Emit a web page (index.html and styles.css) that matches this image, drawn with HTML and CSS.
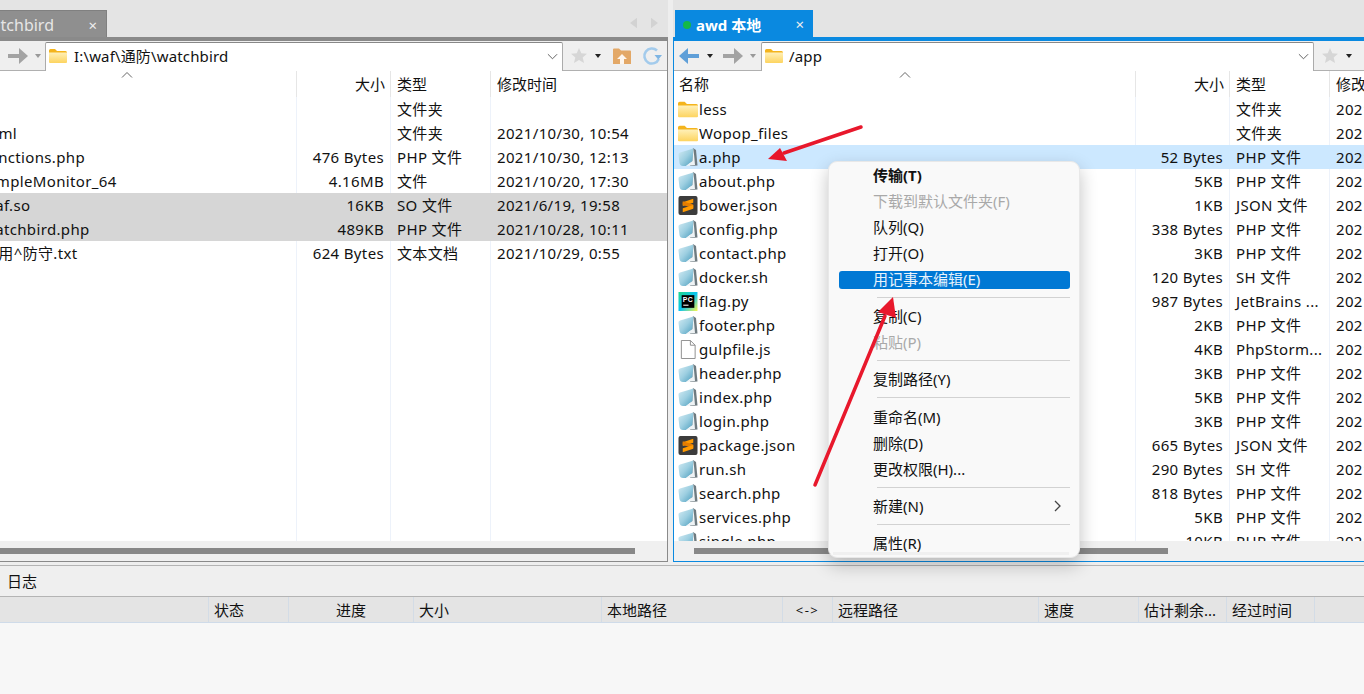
FILE: index.html
```html
<!DOCTYPE html>
<html lang="zh">
<head>
<meta charset="utf-8">
<title>awd 本地</title>
<link rel="stylesheet" href="styles.css">
</head>
<body>
<svg class="sprite" aria-hidden="true">
  <defs>
    <linearGradient id="gFolder" x1="0" y1="0" x2="0" y2="1"><stop offset="0" stop-color="#fff0b8"/><stop offset="1" stop-color="#fdd45f"/></linearGradient>
    <linearGradient id="gPhp" x1="0" y1="0" x2="1" y2="1"><stop offset="0" stop-color="#d4ebf3"/><stop offset=".5" stop-color="#9dcfe1"/><stop offset="1" stop-color="#4a9cbd"/></linearGradient>
    <linearGradient id="gPc" x1="0" y1="0" x2="1" y2="1"><stop offset="0" stop-color="#21d789"/><stop offset=".5" stop-color="#07c3f2"/><stop offset="1" stop-color="#fcf84a"/></linearGradient>
    <symbol id="i-folder" viewBox="0 0 18 16"><path d="M0 2.500Q0 1 1.500 1H6l2 2h8.500Q18 3 18 4.500V6H0z" fill="#f4b41c"/><path d="M0 4.500h18V14q0 1-1 1H1q-1 0-1-1z" fill="url(#gFolder)"/></symbol>
    <symbol id="i-php" viewBox="0 0 20 19"><path d="M15 0 18 2 19.500 17.500 12 18z" fill="#6f7b80"/><path d="M.5 7Q0 5 2 4.500L15.500.5 14.500 13 8 18H5Q2 18 1.500 15z" fill="url(#gPhp)"/><path d="M15.500.5 14.500 13 8 18 17 17z" fill="#eef3f5"/></symbol>
    <symbol id="i-sublime" viewBox="0 0 20 20"><rect width="20" height="20" rx="2" fill="#3c3c3c"/><path d="M15.500 3v4L4.500 10.500v-4z" fill="#ff9a00"/><path d="M4.500 9.500 15.500 13V9L4.500 5.500z" fill="#e57d00"/><path d="M15.500 9.500v4l-11 3.500v-4z" fill="#ff9a00"/></symbol>
    <symbol id="i-pycharm" viewBox="0 0 18 18"><rect width="18" height="18" fill="url(#gPc)"/><rect x="3" y="3" width="12" height="12" fill="#000"/><text x="4" y="9.500" class="pc-text">PC</text><rect x="4.500" y="12" width="5" height="1" fill="#fff"/></symbol>
    <symbol id="i-file" viewBox="0 0 16 20"><path d="M1 .5h9.500l5 5V19.500H1z" fill="#fff" stroke="#8c8c8c"/><path d="M10.500 .5v5h5" fill="none" stroke="#8c8c8c"/></symbol>
    <symbol id="i-arrow" viewBox="0 0 20 16"><path d="M0 6h11V0l9 8-9 8v-6H0z"/></symbol>
    <symbol id="i-star" viewBox="0 0 16 15"><path d="M8 0l2.300 5.200 5.700.5-4.300 3.700 1.300 5.600L8 12l-5 3 1.300-5.600L0 5.700l5.700-.5z"/></symbol>
  </defs>
</svg>

<div class="app">
  <div class="panes">
    <section class="pane pane-local">
      <div class="tabbar">
        <div class="tab tab-idle"><span class="tab-label">watchbird</span><span class="tab-close">×</span></div>
        <div class="tab-nav">
          <svg class="nav-tri" viewBox="0 0 8 12"><path d="M8 0v12L0 6z"/></svg>
          <svg class="nav-tri" viewBox="0 0 8 12"><path d="M0 0v12l8-6z"/></svg>
        </div>
      </div>
      <div class="pane-body">
        <div class="toolbar">
          <svg class="tool-arrow flip tool-blue"><use href="#i-arrow"/></svg><i class="caret"></i>
          <svg class="tool-arrow tool-gray"><use href="#i-arrow"/></svg><i class="caret caret-off"></i>
          <div class="address">
            <svg class="ico-folder"><use href="#i-folder"/></svg><span class="path">I:\waf\通防\watchbird</span>
            <svg class="chev" viewBox="0 0 12 7"><path d="M1 1l5 5 5-5"/></svg>
          </div>
          <svg class="star"><use href="#i-star"/></svg><i class="caret caret-star"></i>
          <svg class="upfolder" viewBox="0 0 18 16"><path d="M0 1.500Q0 .5 1 .5h5l2 2h9q1 0 1 1V16H0z" fill="#e3a867"/><path d="M9 6l5 5h-3v5H7v-5H4z" fill="#fdf6ee"/></svg>
          <svg class="refresh" viewBox="0 0 20 20"><path d="M15 4.500A7.500 7.500 0 1 0 16.800 13" fill="none" stroke="#a3cbec" stroke-width="2.600"/><path d="M12.500 9h7.500l-3.700 4.500z" fill="#7fb5e3"/></svg>
        </div>
        <div class="thead">
          <span class="c-name"><svg class="sort" viewBox="0 0 12 6"><path d="M1 5.500l5-5 5 5"/></svg>名称</span><span class="c-size">大小</span><span class="c-type">类型</span><span class="c-date">修改时间</span>
        </div>
        <div class="list">
          <div class="row"><span class="c-name"><svg class="ico"><use href="#i-folder"/></svg>..</span><span class="c-size"></span><span class="c-type">文件夹</span><span class="c-date"></span></div>
          <div class="row"><span class="c-name"><svg class="ico"><use href="#i-folder"/></svg>html</span><span class="c-size"></span><span class="c-type">文件夹</span><span class="c-date">2021/10/30, 10:54</span></div>
          <div class="row"><span class="c-name"><svg class="ico"><use href="#i-php"/></svg>functions.php</span><span class="c-size">476 Bytes</span><span class="c-type">PHP 文件</span><span class="c-date">2021/10/30, 12:13</span></div>
          <div class="row"><span class="c-name"><svg class="ico"><use href="#i-file"/></svg>SimpleMonitor_64</span><span class="c-size">4.16MB</span><span class="c-type">文件</span><span class="c-date">2021/10/20, 17:30</span></div>
          <div class="row row-grey"><span class="c-name"><svg class="ico"><use href="#i-file"/></svg>waf.so</span><span class="c-size">16KB</span><span class="c-type">SO 文件</span><span class="c-date">2021/6/19, 19:58</span></div>
          <div class="row row-grey"><span class="c-name"><svg class="ico"><use href="#i-php"/></svg>watchbird.php</span><span class="c-size">489KB</span><span class="c-type">PHP 文件</span><span class="c-date">2021/10/28, 10:11</span></div>
          <div class="row"><span class="c-name"><svg class="ico"><use href="#i-file"/></svg>使用^防守.txt</span><span class="c-size">624 Bytes</span><span class="c-type">文本文档</span><span class="c-date">2021/10/29, 0:55</span></div>
        </div>
        <div class="hscroll"><div class="thumb thumb-local"></div></div>
      </div>
    </section>

    <section class="pane pane-remote">
      <div class="tabbar">
        <div class="tab tab-active"><i class="dot"></i><span class="tab-label">awd 本地</span><span class="tab-close">×</span></div>
      </div>
      <div class="pane-body">
        <div class="toolbar">
          <svg class="tool-arrow flip tool-blue"><use href="#i-arrow"/></svg><i class="caret"></i>
          <svg class="tool-arrow tool-gray"><use href="#i-arrow"/></svg><i class="caret caret-off"></i>
          <div class="address">
            <svg class="ico-folder"><use href="#i-folder"/></svg><span class="path">/app</span>
            <svg class="chev" viewBox="0 0 12 7"><path d="M1 1l5 5 5-5"/></svg>
          </div>
          <svg class="star"><use href="#i-star"/></svg><i class="caret caret-star"></i>
        </div>
        <div class="thead">
          <span class="c-name"><svg class="sort" viewBox="0 0 12 6"><path d="M1 5.500l5-5 5 5"/></svg>名称</span><span class="c-size">大小</span><span class="c-type">类型</span><span class="c-date">修改时间</span>
        </div>
        <div class="list">
          <div class="row"><span class="c-name"><svg class="ico"><use href="#i-folder"/></svg>less</span><span class="c-size"></span><span class="c-type">文件夹</span><span class="c-date">2021/10/30</span></div>
          <div class="row"><span class="c-name"><svg class="ico"><use href="#i-folder"/></svg>Wopop_files</span><span class="c-size"></span><span class="c-type">文件夹</span><span class="c-date">2021/10/30</span></div>
          <div class="row row-sel"><span class="c-name"><svg class="ico"><use href="#i-php"/></svg>a.php</span><span class="c-size">52 Bytes</span><span class="c-type">PHP 文件</span><span class="c-date">2021/10/30</span></div>
          <div class="row"><span class="c-name"><svg class="ico"><use href="#i-php"/></svg>about.php</span><span class="c-size">5KB</span><span class="c-type">PHP 文件</span><span class="c-date">2021/10/30</span></div>
          <div class="row"><span class="c-name"><svg class="ico"><use href="#i-sublime"/></svg>bower.json</span><span class="c-size">1KB</span><span class="c-type">JSON 文件</span><span class="c-date">2021/10/30</span></div>
          <div class="row"><span class="c-name"><svg class="ico"><use href="#i-php"/></svg>config.php</span><span class="c-size">338 Bytes</span><span class="c-type">PHP 文件</span><span class="c-date">2021/10/30</span></div>
          <div class="row"><span class="c-name"><svg class="ico"><use href="#i-php"/></svg>contact.php</span><span class="c-size">3KB</span><span class="c-type">PHP 文件</span><span class="c-date">2021/10/30</span></div>
          <div class="row"><span class="c-name"><svg class="ico"><use href="#i-php"/></svg>docker.sh</span><span class="c-size">120 Bytes</span><span class="c-type">SH 文件</span><span class="c-date">2021/10/30</span></div>
          <div class="row"><span class="c-name"><svg class="ico"><use href="#i-pycharm"/></svg>flag.py</span><span class="c-size">987 Bytes</span><span class="c-type">JetBrains ...</span><span class="c-date">2021/10/30</span></div>
          <div class="row"><span class="c-name"><svg class="ico"><use href="#i-php"/></svg>footer.php</span><span class="c-size">2KB</span><span class="c-type">PHP 文件</span><span class="c-date">2021/10/30</span></div>
          <div class="row"><span class="c-name"><svg class="ico"><use href="#i-file"/></svg>gulpfile.js</span><span class="c-size">4KB</span><span class="c-type">PhpStorm...</span><span class="c-date">2021/10/30</span></div>
          <div class="row"><span class="c-name"><svg class="ico"><use href="#i-php"/></svg>header.php</span><span class="c-size">3KB</span><span class="c-type">PHP 文件</span><span class="c-date">2021/10/30</span></div>
          <div class="row"><span class="c-name"><svg class="ico"><use href="#i-php"/></svg>index.php</span><span class="c-size">5KB</span><span class="c-type">PHP 文件</span><span class="c-date">2021/10/30</span></div>
          <div class="row"><span class="c-name"><svg class="ico"><use href="#i-php"/></svg>login.php</span><span class="c-size">3KB</span><span class="c-type">PHP 文件</span><span class="c-date">2021/10/30</span></div>
          <div class="row"><span class="c-name"><svg class="ico"><use href="#i-sublime"/></svg>package.json</span><span class="c-size">665 Bytes</span><span class="c-type">JSON 文件</span><span class="c-date">2021/10/30</span></div>
          <div class="row"><span class="c-name"><svg class="ico"><use href="#i-php"/></svg>run.sh</span><span class="c-size">290 Bytes</span><span class="c-type">SH 文件</span><span class="c-date">2021/10/30</span></div>
          <div class="row"><span class="c-name"><svg class="ico"><use href="#i-php"/></svg>search.php</span><span class="c-size">818 Bytes</span><span class="c-type">PHP 文件</span><span class="c-date">2021/10/30</span></div>
          <div class="row"><span class="c-name"><svg class="ico"><use href="#i-php"/></svg>services.php</span><span class="c-size">5KB</span><span class="c-type">PHP 文件</span><span class="c-date">2021/10/30</span></div>
          <div class="row"><span class="c-name"><svg class="ico"><use href="#i-php"/></svg>single.php</span><span class="c-size">10KB</span><span class="c-type">PHP 文件</span><span class="c-date">2021/10/30</span></div>
        </div>
        <div class="hscroll"><div class="thumb thumb-remote"></div></div>
      </div>
    </section>
  </div>

  <div class="logbar">日志</div>
  <div class="queue-head">
    <span></span><span>状态</span><span class="center">进度</span><span>大小</span><span>本地路径</span><span class="center dir">&lt;-&gt;</span><span>远程路径</span><span>速度</span><span>估计剩余...</span><span>经过时间</span><span></span>
  </div>
  <div class="queue-body"></div>
</div>

<div class="menu">
  <div class="mi mi-bold">传输(T)</div>
  <div class="mi mi-off">下载到默认文件夹(F)</div>
  <div class="mi">队列(Q)</div>
  <div class="mi">打开(O)</div>
  <div class="mi mi-sel"><span>用记事本编辑(E)</span></div>
  <div class="sep"></div>
  <div class="mi">复制(C)</div>
  <div class="mi mi-off">粘贴(P)</div>
  <div class="sep"></div>
  <div class="mi">复制路径(Y)</div>
  <div class="sep"></div>
  <div class="mi">重命名(M)</div>
  <div class="mi">删除(D)</div>
  <div class="mi">更改权限(H)...</div>
  <div class="sep"></div>
  <div class="mi mi-sub">新建(N)<svg class="sub-chev" viewBox="0 0 7 12"><path d="M1 1l5 5-5 5"/></svg></div>
  <div class="sep"></div>
  <div class="mi">属性(R)</div>
  <div class="menu-strip"></div>
</div>

<svg class="annot" viewBox="0 0 1364 694">
  <path class="annot-line" d="M861 127 784 153"/>
  <path class="annot-head" d="M768 159 780 148 787 161z"/>
  <path class="annot-line" d="M815 485 885 316"/>
  <path class="annot-head" d="M893 297 896 318 878 312z"/>
</svg>
</body>
</html>
```

FILE: styles.css
```css
* { box-sizing: border-box; }
html, body { margin: 0; height: 100%; }
body {
  position: relative;
  overflow: hidden;
  width: 1364px;
  height: 694px;
  background: #f7f7f7;
  color: #111;
  font: 15px/24px "Noto Sans", "Noto Sans CJK SC", sans-serif;
}
.sprite { position: absolute; width: 0; height: 0; }
.pc-text { font: bold 6.5px "Liberation Sans", sans-serif; fill: #fff; }

/* The window is cropped on the left, so the app starts off-screen. */
.app { width: 1406px; margin-left: -42px; height: 694px; display: flex; flex-direction: column; }
.panes { display: grid; grid-template-columns: 710px 1fr; column-gap: 5px; height: 566px; background: #eee; border-bottom: 1px solid #b4b4b4; flex: none; }
.pane { min-width: 0; overflow: hidden; }

.tabbar { height: 37px; background: #e4e4e4; display: flex; align-items: flex-end; padding-left: 2px; }
.tab { height: 27px; display: flex; align-items: center; color: #fff; position: relative; flex: none; padding-top: 2px; }
.tab-idle { width: 147px; background: #8f8f8f; border: 1px solid #808080; border-bottom: 0; padding-left: 18px; color: #e6e6e6; font-size: 16px; }
.tab-active { width: 138px; margin-bottom: -1px; height: 28px; background: #0a89e0; padding-left: 8px; font-weight: 700; }
.dot { width: 8px; height: 8px; border-radius: 50%; background: #14b84a; margin-right: 5px; }
.tab-close { position: absolute; right: 9px; top: 2px; font-weight: 400; font-size: 15px; color: #eee; }
.tab-nav { margin-left: auto; display: flex; gap: 14px; padding: 0 10px 8px 0; }
.nav-tri { width: 7px; height: 12px; fill: #d2d2d2; }

.pane-body { height: 525px; display: flex; flex-direction: column; background: #fff; }
.pane-local .pane-body { border-top: 4px solid #8a8a8a; border-right: 1px solid #8a8a8a; border-bottom: 1px solid #8a8a8a; }
.pane-remote .pane-body { border-top: 4px solid #0a89e0; border-left: 1px solid #0a89e0; border-bottom: 1px solid #0a89e0; }

.toolbar { height: 30px; flex: none; display: flex; align-items: center; background: #efefef; border-bottom: 1px solid #b0b0b0; padding-left: 6px; position: relative; }
.pane-remote .toolbar { padding-left: 5px; }
.tool-arrow { width: 20px; height: 16px; flex: none; }
.tool-blue { fill: #5f9fd8; }
.tool-gray { fill: #a3a3a3; margin-left: 10px; }
.flip { transform: scaleX(-1); }
.caret { width: 0; height: 0; border: 3.5px solid transparent; border-top: 4px solid #222; border-bottom: 0; margin-left: 8px; flex: none; }
.caret-off { border-top-color: #999; margin-left: 7px; }
.address { width: 518px; height: 29px; margin: 1px 0 0 4px; padding: 0 0 2px 3px; background: #fff; border: 1px solid #ababab; border-bottom: 0; border-top-color: #888; border-radius: 2px 2px 0 0; display: flex; align-items: center; flex: none; align-self: flex-start; }
.pane-remote .address { width: 553px; margin-left: 5px; }
.ico-folder { width: 18px; height: 16px; flex: none; margin-right: 7px; }
.pane-remote .ico-folder { margin-right: 6px; }
.path { flex: 1; white-space: nowrap; letter-spacing: .15px; }
.chev { width: 11px; height: 7px; margin-right: 4px; fill: none; stroke: #555; }
.star { width: 16px; height: 15px; fill: #d6d6d6; margin-left: 8px; flex: none; }
.caret-star { margin-left: 8px; }
.upfolder { width: 18px; height: 16px; margin-left: 12px; flex: none; }
.refresh { width: 20px; height: 20px; margin-left: 11px; flex: none; }

.thead, .row { display: grid; grid-template-columns: 338px 94px 100px 1fr; }
.pane-remote .thead, .pane-remote .row { grid-template-columns: 461px 94px 100px 1fr; }
.thead { height: 26px; flex: none; line-height: 27px; background: #fff; }
.thead span { border-left: 1px solid #e6e6e6; height: 26px; position: relative; white-space: nowrap; }
.thead .c-name { border-left: 0; padding-left: 4px; }
.pane-remote .thead .c-name { padding-left: 5px; }
.thead .c-type { padding-left: 6px; }
.thead .c-date { padding-left: 6px; }
.sort { position: absolute; left: 163px; top: 1px; width: 12px; height: 6px; fill: none; stroke: #666; }
.pane-remote .sort { left: 225px; }

.list { height: 444px; flex: none; overflow: hidden; background-repeat: no-repeat; background-size: 1px 100%;
  background-image: linear-gradient(#edf2fa, #edf2fa), linear-gradient(#edf2fa, #edf2fa), linear-gradient(#edf2fa, #edf2fa);
  background-position: 338px 0, 432px 0, 532px 0; }
.pane-remote .list { background-position: 461px 0, 555px 0, 655px 0; }
.row { height: 24px; padding-top: 1px; line-height: 23px; white-space: nowrap; letter-spacing: .35px; }
.row > span { overflow: hidden; }
.c-name { display: flex; align-items: center; height: 23px; }
.thead .c-name { display: block; height: 26px; }
.list .c-name { padding-left: 4px; }
.ico { width: 20px; height: 19px; margin-right: 1px; flex: none; }
.list .c-size { text-align: right; padding-right: 6px; }
.thead .c-size { text-align: right; padding-right: 5px; }
.list .c-type, .list .c-date { padding-left: 7px; }
.row-grey { background: #d6d6d6; }
.row-sel { background: #cce8ff; }

.hscroll { height: 20px; flex: none; background: #f0f0f0; padding-top: 7px; }
.thumb { height: 6px; background: #888; }
.thumb-local { width: 677px; }
.thumb-remote { width: 474px; margin-left: 20px; }

.logbar { height: 31px; flex: none; background: #efefef; border-bottom: 1px solid #b4b4b4; padding-left: 49px; line-height: 30px; }
.queue-head { height: 26px; flex: none; background: #e4e4e4; border-bottom: 1px solid #cfdbe9; display: grid;
  grid-template-columns: 250px 80px 125px 188px 181px 50px 206px 100px 88px 88px 1fr; line-height: 26px; }
.queue-head span { border-left: 1px solid #d3dce6; padding-left: 5px; white-space: nowrap; overflow: hidden; }
.queue-head span:first-child { border-left: 0; }
.center { text-align: center; padding-left: 0 !important; }
.dir { font-size: 13px; letter-spacing: 1.5px; }
.queue-body { flex: 1; background: #f7f7f7; }

.menu { position: absolute; left: 828px; top: 161px; width: 252px; height: 397px; background: #f9f9f9; border: 1px solid #e8e8e8; border-radius: 9px; box-shadow: 0 7px 18px rgba(0, 0, 0, .24); overflow: hidden; }
.mi { height: 26px; line-height: 26px; padding-left: 44px; white-space: nowrap; }
.mi-bold { font-weight: 700; }
.mi-off { color: #a9a9a9; }
.mi-sel { color: #e8f3fc; position: relative; z-index: 0; }
.mi-sel::before { content: ""; position: absolute; z-index: -1; left: 10px; right: 9px; top: 5px; height: 18px; background: #0078d4; border-radius: 3px; }
.sep { height: 11.2px; padding: 5px 9px 5px 48px; }
.sep::before { content: ""; display: block; height: 1px; background: #d2d2d2; }
.mi-sub { position: relative; }
.sub-chev { position: absolute; right: 18px; top: 7px; width: 7px; height: 12px; fill: none; stroke: #444; stroke-width: 1.3; }
.menu-strip { position: absolute; left: 4px; right: 10px; bottom: 2px; height: 3px; background: #f0f0f0; }

.annot { position: absolute; left: 0; top: 0; width: 1364px; height: 694px; pointer-events: none; }
.annot-line { fill: none; stroke: #e8182c; stroke-width: 3.5; stroke-linecap: round; }
.annot-head { fill: #e8182c; }
```
